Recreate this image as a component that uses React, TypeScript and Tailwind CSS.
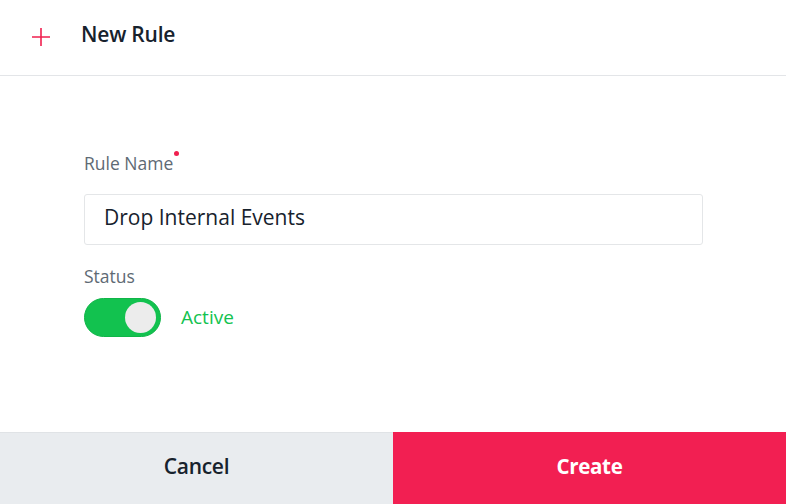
import React from "react";

export default function App() {
  return (
    <div
      className="w-[786px] h-[504px] bg-white flex flex-col overflow-hidden"
      style={{ fontFamily: "'Open Sans', Lato, sans-serif" }}
    >
      <div className="h-[76px] shrink-0 flex items-center border-b border-[#e3e5e8]">
        <div className="w-[81px] flex justify-center pl-[1px]">
          <svg width="20" height="20" viewBox="0 0 20 20" className="mt-[-2px]">
            <path d="M10 1v18M1 10h18" stroke="#f0204f" strokeWidth="1.6" />
          </svg>
        </div>
        <div className="text-[21px] font-semibold text-[#17222d] mt-[-7px] leading-[26px] tracking-[-0.2px]">New Rule</div>
      </div>

      <div className="flex-1 flex flex-col pl-[84px] pt-[76px]">
        <div className="flex items-start text-[17.5px] text-[#5e6a74] leading-[22px]">
          <span>Rule Name</span>
          <span className="w-[5px] h-[5px] rounded-full bg-[#f0204f] ml-[1px] mt-[-1px]" />
        </div>
        <div className="mt-[20px] w-[619px] h-[51px] border border-[#e4e6e8] rounded-[3px] flex items-center pl-[19px] pb-[4px] text-[21px] text-[#17222d]">
          Drop Internal Events
        </div>
        <div className="mt-[20px] text-[17.5px] text-[#5e6a74] leading-[22px]">Status</div>
        <div className="mt-[11px] flex items-center">
          <div className="w-[77px] h-[39px] rounded-full bg-[#12c24f] border border-[#10b548] flex items-center justify-end pr-[4px]">
            <div className="w-[31px] h-[31px] rounded-full bg-[#ececec]" />
          </div>
          <div className="ml-[20px] text-[19px] text-[#12c24f]">Active</div>
        </div>
      </div>

      <div className="h-[72px] shrink-0 flex">
        <div className="w-[393px] bg-[#e9ecef] border-t border-[#e0e3e6] flex items-center justify-center pb-[3px] text-[21px] font-semibold text-[#17222d] tracking-[-0.3px]">
          Cancel
        </div>
        <div className="flex-1 bg-[#f21f52] flex items-center justify-center pb-[3px] text-[20.5px] font-bold text-white tracking-[-0.3px]">
          Create
        </div>
      </div>
    </div>
  );
}
